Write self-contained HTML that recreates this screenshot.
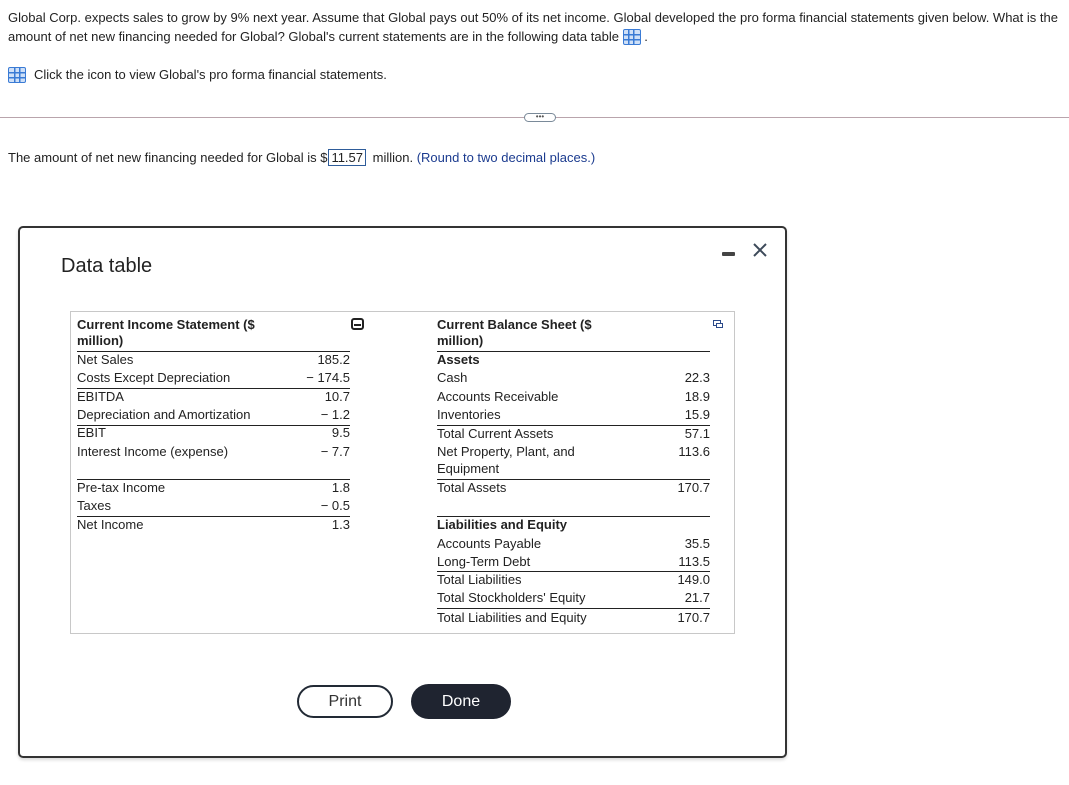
<!DOCTYPE html>
<html><head><meta charset="utf-8"><style>
*{margin:0;padding:0;box-sizing:border-box}
body{width:1069px;height:785px;background:#fff;font-family:"Liberation Sans",Arial,sans-serif;color:#222;position:relative;overflow:hidden}
.a{position:absolute;white-space:nowrap}
.t{font-size:13px;line-height:14px}
.r{text-align:right}
.b{font-weight:bold}
.ln{position:absolute;height:1px;background:#222}
.gi{display:inline-block;width:18px;height:16px;border:1.5px solid #3a7bd5;border-radius:2px;background:
linear-gradient(#3a7bd5,#3a7bd5) 0 4px/100% 1.5px no-repeat,
linear-gradient(#3a7bd5,#3a7bd5) 0 8.5px/100% 1.5px no-repeat,
linear-gradient(#3a7bd5,#3a7bd5) 4.5px 0/1.5px 100% no-repeat,
linear-gradient(#3a7bd5,#3a7bd5) 9.5px 0/1.5px 100% no-repeat;background-color:#cfe0f7}
</style></head><body>
<div class="a" style="left:8px;top:8px;font-size:13px;line-height:19px;color:#222">Global Corp. expects sales to grow by 9% next year. Assume that Global pays out 50% of its net income. Global developed the pro forma financial statements given below. What is the<br>amount of net new financing needed for Global? Global's current statements are in the following data table <span class="gi" style="vertical-align:-4px"></span> .</div>
<div class="a" style="left:8px;top:67px;font-size:13px;line-height:16px"><span class="gi" style="vertical-align:-4px;margin-right:8px"></span>Click the icon to view Global's pro forma financial statements.</div>
<div class="a" style="left:0;top:117px;width:1069px;height:1px;background:#b9a4ac"></div>
<div class="a" style="left:524px;top:113px;width:32px;height:9px;border:1px solid #7a8a99;border-radius:5px;background:#fff;font-size:8px;line-height:5px;text-align:center;color:#555">•••</div>
<div class="a" style="left:8px;top:149px;font-size:13px;line-height:16px">The amount of net new financing needed for Global is $<span style="display:inline-block;border:1px solid #2e5c9a;padding:0 2px;margin:0 3px 0 1px;line-height:15px">11.57</span> million. <span style="color:#1b3b8f">(Round to two decimal places.)</span></div>

<div class="a" style="left:18px;top:226px;width:769px;height:532px;border:2px solid #333;border-radius:5px;box-shadow:0 2px 3px rgba(0,0,0,.15)"></div>
<div class="a" style="left:61px;top:254px;font-size:20px;line-height:24px;color:#222">Data table</div>
<div class="a" style="left:722px;top:252px;width:13px;height:4px;background:#444;border-radius:1px"></div>
<svg class="a" style="left:752px;top:242px" width="16" height="16" viewBox="0 0 16 16"><path d="M2 2L14 14M14 2L2 14" stroke="#3d4a5a" stroke-width="2"/></svg>

<div class="a" style="left:70px;top:311px;width:665px;height:323px;border:1px solid #c8c8c8"></div>
<div class="a" style="left:351px;top:318px;width:13px;height:12px;border:2px solid #222;border-radius:3px"><div style="position:absolute;left:1px;top:4px;width:7px;height:2px;background:#222"></div></div>
<div class="a" style="left:713px;top:320px;width:8px;height:6px;border:1px solid #2c4a8a"></div>
<div class="a" style="left:716px;top:323px;width:7px;height:5px;border:1px solid #2c4a8a;background:#fff"></div>

<!-- left table -->
<div class="a t b" style="left:77px;top:318px">Current Income Statement ($</div>
<div class="a t b" style="left:77px;top:334px">million)</div>
<div class="ln" style="left:77px;top:351px;width:273px"></div>
<div class="a t" style="left:77px;top:353px">Net Sales</div><div class="a t r" style="left:290px;width:60px;top:353px">185.2</div>
<div class="a t" style="left:77px;top:371px">Costs Except Depreciation</div><div class="a t r" style="left:290px;width:60px;top:371px">− 174.5</div>
<div class="ln" style="left:77px;top:388px;width:273px"></div>
<div class="a t" style="left:77px;top:390px">EBITDA</div><div class="a t r" style="left:290px;width:60px;top:390px">10.7</div>
<div class="a t" style="left:77px;top:408px">Depreciation and Amortization</div><div class="a t r" style="left:290px;width:60px;top:408px">− 1.2</div>
<div class="ln" style="left:77px;top:425px;width:273px"></div>
<div class="a t" style="left:77px;top:426px">EBIT</div><div class="a t r" style="left:290px;width:60px;top:426px">9.5</div>
<div class="a t" style="left:77px;top:445px">Interest Income (expense)</div><div class="a t r" style="left:290px;width:60px;top:445px">− 7.7</div>
<div class="ln" style="left:77px;top:479px;width:273px"></div>
<div class="a t" style="left:77px;top:481px">Pre-tax Income</div><div class="a t r" style="left:290px;width:60px;top:481px">1.8</div>
<div class="a t" style="left:77px;top:499px">Taxes</div><div class="a t r" style="left:290px;width:60px;top:499px">− 0.5</div>
<div class="ln" style="left:77px;top:516px;width:273px"></div>
<div class="a t" style="left:77px;top:518px">Net Income</div><div class="a t r" style="left:290px;width:60px;top:518px">1.3</div>

<!-- right table -->
<div class="a t b" style="left:437px;top:318px">Current Balance Sheet ($</div>
<div class="a t b" style="left:437px;top:334px">million)</div>
<div class="ln" style="left:437px;top:351px;width:273px"></div>
<div class="a t b" style="left:437px;top:353px">Assets</div>
<div class="a t" style="left:437px;top:371px">Cash</div><div class="a t r" style="left:650px;width:60px;top:371px">22.3</div>
<div class="a t" style="left:437px;top:390px">Accounts Receivable</div><div class="a t r" style="left:650px;width:60px;top:390px">18.9</div>
<div class="a t" style="left:437px;top:408px">Inventories</div><div class="a t r" style="left:650px;width:60px;top:408px">15.9</div>
<div class="ln" style="left:437px;top:425px;width:273px"></div>
<div class="a t" style="left:437px;top:427px">Total Current Assets</div><div class="a t r" style="left:650px;width:60px;top:427px">57.1</div>
<div class="a t" style="left:437px;top:445px">Net Property, Plant, and</div><div class="a t r" style="left:650px;width:60px;top:445px">113.6</div>
<div class="a t" style="left:437px;top:462px">Equipment</div>
<div class="ln" style="left:437px;top:479px;width:273px"></div>
<div class="a t" style="left:437px;top:481px">Total Assets</div><div class="a t r" style="left:650px;width:60px;top:481px">170.7</div>
<div class="ln" style="left:437px;top:516px;width:273px"></div>
<div class="a t b" style="left:437px;top:518px">Liabilities and Equity</div>
<div class="a t" style="left:437px;top:537px">Accounts Payable</div><div class="a t r" style="left:650px;width:60px;top:537px">35.5</div>
<div class="a t" style="left:437px;top:555px">Long-Term Debt</div><div class="a t r" style="left:650px;width:60px;top:555px">113.5</div>
<div class="ln" style="left:437px;top:571px;width:273px"></div>
<div class="a t" style="left:437px;top:573px">Total Liabilities</div><div class="a t r" style="left:650px;width:60px;top:573px">149.0</div>
<div class="a t" style="left:437px;top:591px">Total Stockholders' Equity</div><div class="a t r" style="left:650px;width:60px;top:591px">21.7</div>
<div class="ln" style="left:437px;top:608px;width:273px"></div>
<div class="a t" style="left:437px;top:611px">Total Liabilities and Equity</div><div class="a t r" style="left:650px;width:60px;top:611px">170.7</div>

<div class="a" style="left:297px;top:685px;width:96px;height:33px;border:2px solid #222a35;border-radius:17px;text-align:center;line-height:29px;font-size:16px;color:#333">Print</div>
<div class="a" style="left:411px;top:684px;width:100px;height:35px;background:#1f2430;border-radius:18px;text-align:center;line-height:35px;font-size:16px;color:#fff">Done</div>
</body></html>
